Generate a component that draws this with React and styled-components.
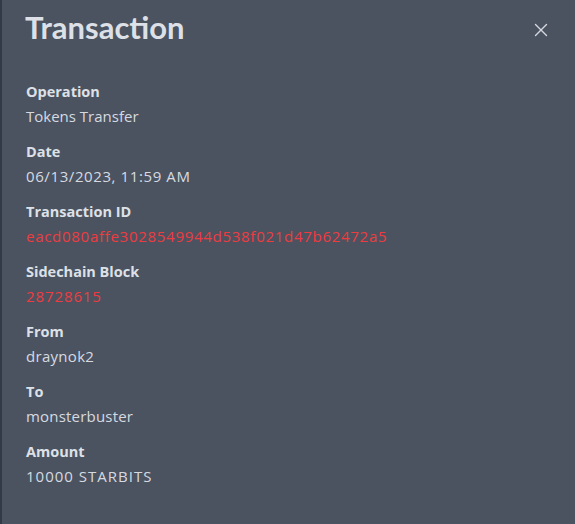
import React from "react";
import styled, { createGlobalStyle } from "styled-components";

const Global = createGlobalStyle`
  html, body { margin: 0; padding: 0; background: #4b5361; }
  body { font-family: "Open Sans", "Noto Sans", sans-serif; }
`;

const Modal = styled.div`
  width: 575px;
  height: 524px;
  box-sizing: border-box;
  background: #4b5361;
  border-left: 2px solid #333a46;
  display: flex;
  flex-direction: column;
`;

const Header = styled.div`
  display: flex;
  align-items: center;
  justify-content: space-between;
  padding: 3px 24px 0 23px;
  height: 48px;
`;

const Title = styled.h2`
  margin: 0;
  font-family: Lato, "Open Sans", sans-serif;
  font-size: 31px;
  font-weight: 700;
  color: #dde1e7;
`;

const Close = styled.button`
  background: none;
  border: none;
  padding: 0;
  width: 14px;
  height: 14px;
  margin-right: 3px;
  margin-top: 5px;
  color: #d6dae0;
  cursor: pointer;
  display: flex;
`;

const Body = styled.div`
  padding: 29px 24px 0 24px;
  display: flex;
  flex-direction: column;
  gap: 12px;
`;

const Field = styled.div`
  display: flex;
  flex-direction: column;
`;

const Label = styled.div`
  font-size: 14.5px;
  font-weight: 700;
  line-height: 24px;
  color: #dde1e7;
`;

const Value = styled.div`
  font-size: 15px;
  line-height: 24px;
  letter-spacing: ${(p) => p.$spacing || 0}px;
  color: ${(p) => (p.$link ? "#ef3b3f" : "#d6dae0")};
`;

const fields = [
  { label: "Operation", value: "Tokens Transfer" },
  { label: "Date", value: "06/13/2023, 11:59 AM", spacing: 0.6 },
  { label: "Transaction ID", value: "eacd080affe3028549944d538f021d47b62472a5", link: true, spacing: 0.72 },
  { label: "Sidechain Block", value: "28728615", link: true, spacing: 0.9 },
  { label: "From", value: "draynok2", spacing: 0.3 },
  { label: "To", value: "monsterbuster", spacing: 0.2 },
  { label: "Amount", value: "10000 STARBITS", spacing: 1 },
];

export default function App() {
  return (
    <>
      <Global />
      <Modal>
        <Header>
          <Title>Transaction</Title>
          <Close aria-label="Close">
            <svg width="14" height="14" viewBox="0 0 14 14">
              <path d="M1.5 1.5 L12.5 12.5 M12.5 1.5 L1.5 12.5" stroke="currentColor" strokeWidth="1.4" strokeLinecap="round" />
            </svg>
          </Close>
        </Header>
        <Body>
          {fields.map((f) => (
            <Field key={f.label}>
              <Label>{f.label}</Label>
              <Value $link={f.link} $spacing={f.spacing}>{f.value}</Value>
            </Field>
          ))}
        </Body>
      </Modal>
    </>
  );
}
